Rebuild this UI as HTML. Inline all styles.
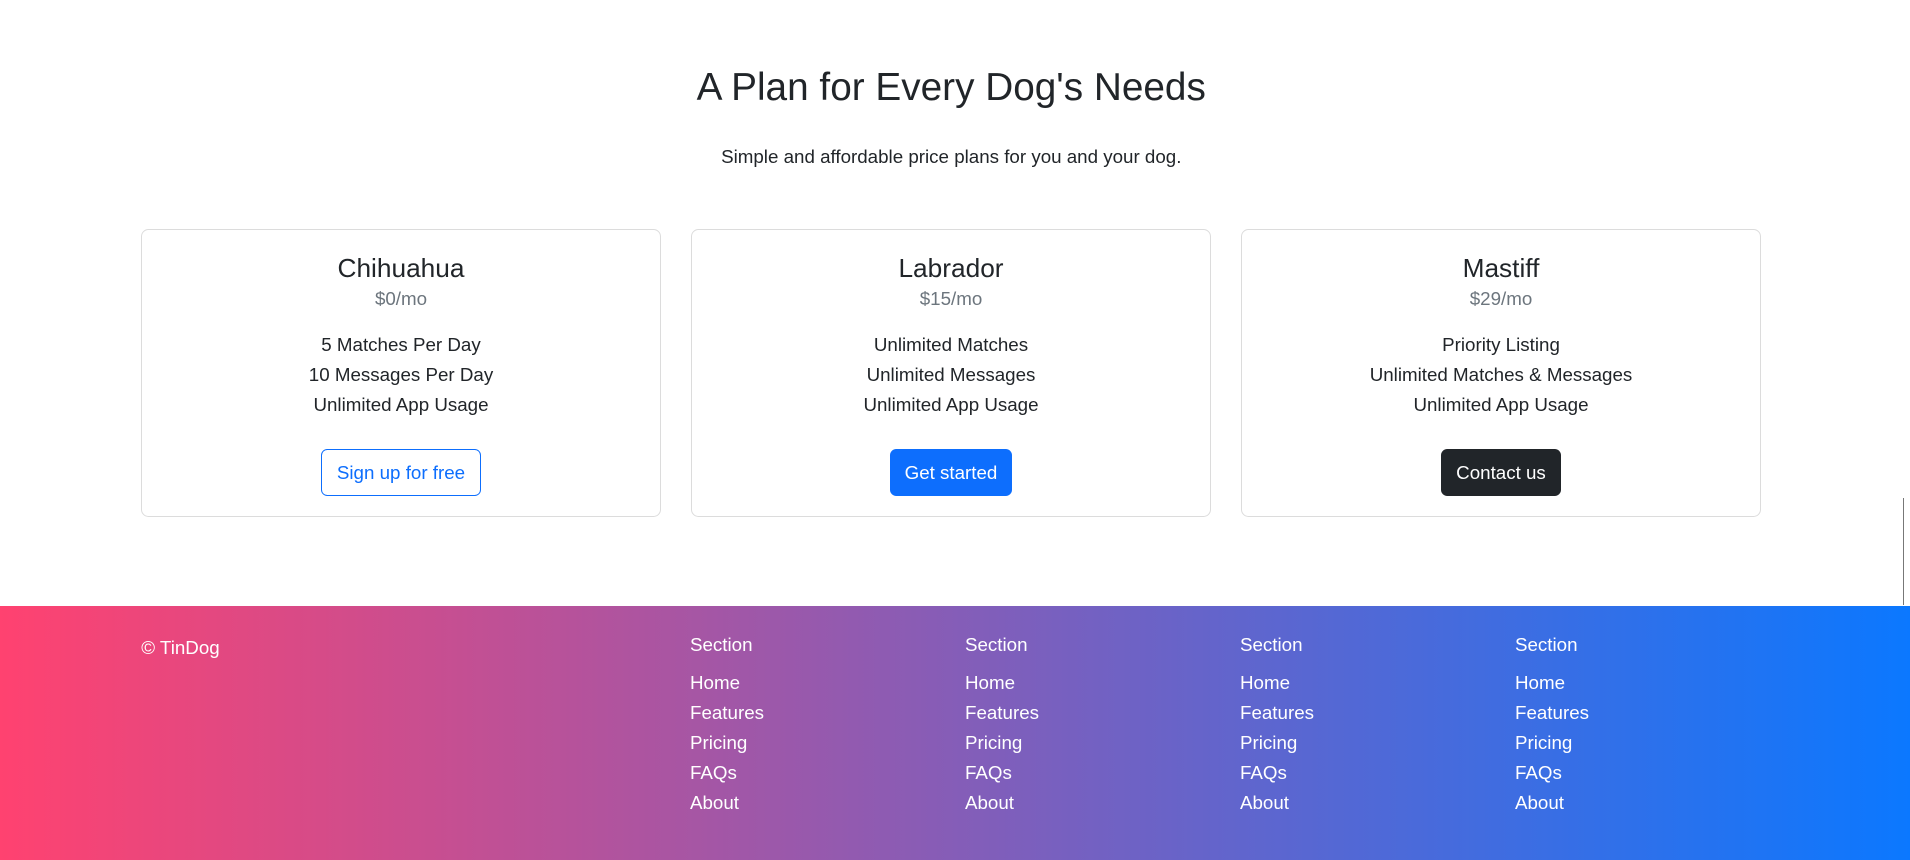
<!DOCTYPE html>
<html><head><meta charset="utf-8">
<style>
html,body{margin:0;padding:0;overflow:hidden}
body{width:1528px;height:688px;zoom:1.25;position:relative;background:#fff;font-family:"Liberation Sans",sans-serif;color:#212529}
.abs{position:absolute}
h2{position:absolute;left:0;width:1522px;top:48px;margin:0;text-align:center;font-weight:400;font-size:31px;line-height:44px}
.sub{left:0;width:1522px;top:114px;text-align:center;font-size:15px;line-height:22px}
.card{position:absolute;top:183px;width:414px;height:229px;border:1px solid #dcdcdc;border-radius:6px;text-align:center}
.card .t{margin-top:17px;font-size:21px;line-height:28px}
.card .p{color:#6c757d;font-size:15px;line-height:24px;margin-top:-2px}
.card ul{list-style:none;padding:0;margin:13px 0 0;font-size:15px;line-height:24px}
.btn{display:inline-block;margin-top:23px;height:38px;line-height:38px;padding:0 12px;border-radius:5px;font-size:15px;box-sizing:border-box}
.b1{border:1px solid #0d6efd;color:#0d6efd;line-height:36px}
.b2{background:#0d6efd;color:#fff}
.b3{background:#212529;color:#fff}
footer{position:absolute;left:0;top:485px;width:1528px;height:203px;background:linear-gradient(to right,#ff4270,#0b78ff)}
footer div{color:#fff}
.col{position:absolute;top:19px;font-size:15px;line-height:24px}
.col .h{margin-bottom:6px}
.sb{position:absolute;left:1522px;top:398px;width:1px;height:86px;background:#777}
</style></head><body>
<h2>A Plan for Every Dog's Needs</h2>
<div class="abs sub">Simple and affordable price plans for you and your dog.</div>
<div class="card" style="left:113px"><div class="t">Chihuahua</div><div class="p">$0/mo</div><ul><li>5 Matches Per Day</li><li>10 Messages Per Day</li><li>Unlimited App Usage</li></ul><span class="btn b1">Sign up for free</span></div>
<div class="card" style="left:553px"><div class="t">Labrador</div><div class="p">$15/mo</div><ul><li>Unlimited Matches</li><li>Unlimited Messages</li><li>Unlimited App Usage</li></ul><span class="btn b2">Get started</span></div>
<div class="card" style="left:993px"><div class="t">Mastiff</div><div class="p">$29/mo</div><ul><li>Priority Listing</li><li>Unlimited Matches &amp; Messages</li><li>Unlimited App Usage</li></ul><span class="btn b3">Contact us</span></div>
<div class="sb"></div>
<footer>
<div class="abs" style="left:113px;top:21px;font-size:15px;line-height:24px">© TinDog</div>
<div class="col" style="left:552px"><div class="h">Section</div><div>Home</div><div>Features</div><div>Pricing</div><div>FAQs</div><div>About</div></div>
<div class="col" style="left:772px"><div class="h">Section</div><div>Home</div><div>Features</div><div>Pricing</div><div>FAQs</div><div>About</div></div>
<div class="col" style="left:992px"><div class="h">Section</div><div>Home</div><div>Features</div><div>Pricing</div><div>FAQs</div><div>About</div></div>
<div class="col" style="left:1212px"><div class="h">Section</div><div>Home</div><div>Features</div><div>Pricing</div><div>FAQs</div><div>About</div></div>
</footer>
</body></html>
